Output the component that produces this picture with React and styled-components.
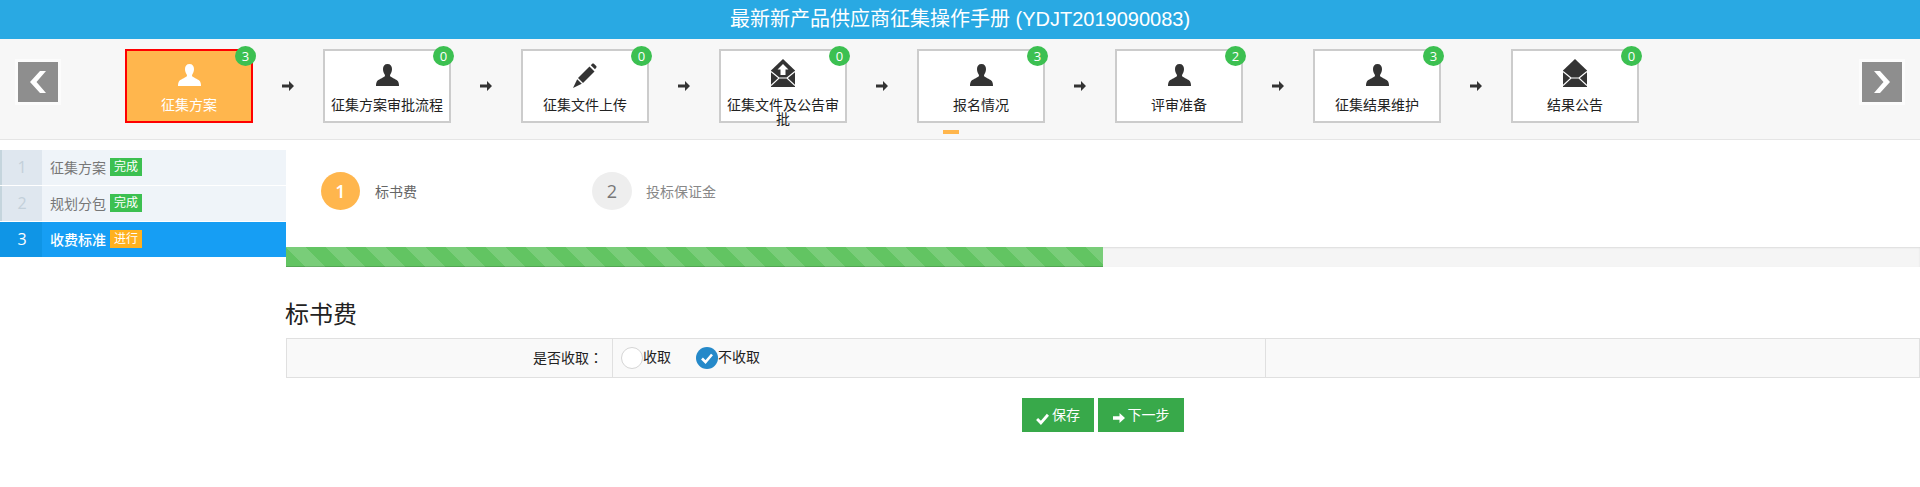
import React from 'react';
import styled, { createGlobalStyle } from 'styled-components';

const GlobalStyle = createGlobalStyle`
  html, body {
    margin: 0;
    padding: 0;
    background: #fff;
    font-family: "Open Sans", "Noto Sans CJK SC", sans-serif;
    font-size: 14px;
    color: #333;
  }
  * {
    box-sizing: border-box;
  }
`;

const Header = styled.header`
  height: 39px;
  background: #29a9e3;
  color: #fff;
  font-family: "Liberation Sans", "Noto Sans CJK SC", sans-serif;
  font-size: 20px;
  line-height: 39px;
  text-align: center;
`;

const Nav = styled.nav`
  position: relative;
  display: flex;
  align-items: flex-start;
  height: 101px;
  background: #f7f7f7;
  border-bottom: 1px solid #e5e5e5;
`;

const PageButton = styled.button`
  flex: none;
  display: flex;
  align-items: center;
  justify-content: center;
  width: 46px;
  height: 46px;
  margin: 20px 0 0 ${p => p.$left}px;
  padding: 0;
  background: #8e8e8e;
  border: 3px solid #fcfcfc;
`;

const StepList = styled.div`
  display: flex;
  align-items: center;
  margin: 10px 0 0 64px;
`;

const StepWrap = styled.div`
  display: flex;
  align-items: center;
`;

const Step = styled.div`
  position: relative;
  width: 128px;
  height: 74px;
  padding-top: 13px;
  background: ${p => (p.$active ? '#ffb64d' : '#fff')};
  border: 2px solid ${p => (p.$active ? '#ff0000' : '#ccc')};
  color: ${p => (p.$active ? '#fff' : '#222')};
  text-align: center;
`;

const StepIcon = styled.div`
  display: flex;
  align-items: center;
  justify-content: center;
  height: 22px;
`;

const StepLabel = styled.div`
  margin-top: 12px;
  padding: 0 2px;
  font-size: 14px;
  line-height: 14px;
`;

const Count = styled.span`
  position: absolute;
  top: -5px;
  right: -5px;
  width: 21px;
  height: 20px;
  border-radius: 50%;
  background: #3cc051;
  color: #fff;
  font-size: 13px;
  line-height: 20px;
  text-align: center;
`;

const ArrowSlot = styled.div`
  display: flex;
  align-items: center;
  justify-content: center;
  width: 70px;
`;

const ScrollMark = styled.span`
  position: absolute;
  left: 943px;
  top: 91px;
  width: 16px;
  height: 4px;
  background: #ffb64d;
`;

const Main = styled.main`
  display: flex;
  align-items: flex-start;
`;

const Sidebar = styled.ul`
  flex: none;
  width: 286px;
  margin: 10px 0 0;
  padding: 0;
  list-style: none;
`;

const SideItem = styled.li`
  display: flex;
  align-items: center;
  height: 35px;
  margin-bottom: 1px;
  background: ${p => (p.$active ? '#169ef4' : '#eff4f9')};
  color: ${p => (p.$active ? '#fff' : '#777')};
  font-size: 14px;
  font-weight: ${p => (p.$active ? 500 : 400)};
`;

const SideNumber = styled.span`
  flex: none;
  width: 42px;
  height: 100%;
  margin-right: 8px;
  background: ${p => (p.$active ? '#0f95e6' : '#dfe7ef')};
  border-left: 2px solid ${p => (p.$active ? '#0f95e6' : '#c5d5dd')};
  color: ${p => (p.$active ? '#fff' : '#c3d0da')};
  font-size: 16px;
  font-weight: 400;
  line-height: 35px;
  text-align: center;
`;

const SideText = styled.span`
  display: flex;
  align-items: center;
  margin-top: -2px;
`;

const SideBadge = styled.span`
  width: 32px;
  height: 18px;
  margin-left: 4px;
  background: ${p => (p.$active ? '#ffb11f' : '#3cc051')};
  color: #fff;
  font-size: 12px;
  font-weight: 400;
  line-height: 18px;
  text-align: center;
`;

const Content = styled.section`
  flex: 1;
  min-width: 0;
`;

const Tabs = styled.div`
  display: flex;
  align-items: center;
  height: 38px;
  margin: 32px 0 37px 35px;
`;

const Tab = styled.div`
  display: flex;
  align-items: center;
  width: 271px;
  color: ${p => (p.$active ? '#666' : '#888')};
  font-size: 14px;
`;

const TabNumber = styled.span`
  width: ${p => (p.$active ? 39 : 40)}px;
  height: 38px;
  margin-right: ${p => (p.$active ? 15 : 14)}px;
  border-radius: 50%;
  background: ${p => (p.$active ? '#ffb64d' : '#eee')};
  color: ${p => (p.$active ? '#fff' : '#777')};
  font-size: 18px;
  font-weight: ${p => (p.$active ? 600 : 400)};
  line-height: 38px;
  text-align: center;
`;

const Progress = styled.div`
  height: 20px;
  background: #f5f5f5;
  box-shadow: inset 0 1px 2px rgba(0, 0, 0, 0.1);
`;

const ProgressFill = styled.div`
  height: 100%;
  background-color: #62c462;
  background-image: linear-gradient(
    45deg,
    rgba(255, 255, 255, 0.15) 25%,
    transparent 25%,
    transparent 50%,
    rgba(255, 255, 255, 0.15) 50%,
    rgba(255, 255, 255, 0.15) 75%,
    transparent 75%,
    transparent
  );
  background-size: 40px 40px;
  box-shadow: inset 0 -1px 0 rgba(0, 0, 0, 0.15);
`;

const Title = styled.h3`
  margin: 32px 0 10px -1px;
  color: #222;
  font-size: 24px;
  font-weight: 400;
  line-height: 29px;
`;

const FormRow = styled.div`
  display: grid;
  grid-template-columns: 326px 652px 1fr;
  height: 40px;
  background: #f9f9f9;
  border: 1px solid #e0e0e0;
`;

const FormLabel = styled.div`
  padding-right: 9px;
  border-right: 1px solid #e0e0e0;
  color: #222;
  line-height: 36px;
  text-align: right;
`;

const FormColon = styled.span`
  font-family: "Noto Sans CJK TC", sans-serif;
`;

const FormCell = styled.div`
  display: flex;
  align-items: center;
  padding-left: 8px;
  color: #222;
  & + & {
    border-left: 1px solid #e0e0e0;
  }
`;

const Radio = styled.label`
  display: flex;
  align-items: center;
  margin-right: 25px;
`;

const RadioMark = styled.span`
  display: flex;
  align-items: center;
  justify-content: center;
  width: 22px;
  height: 22px;
  border-radius: 50%;
  background: ${p => (p.$checked ? '#2589c9' : '#fff')};
  border: ${p => (p.$checked ? 'none' : '1px solid #d5d5d5')};
`;

const RadioText = styled.span`
  margin-top: -4px;
`;

const Actions = styled.div`
  display: flex;
  justify-content: center;
  gap: 4px;
  margin-top: 20px;
`;

const ActionButton = styled.button`
  display: flex;
  align-items: center;
  justify-content: center;
  gap: 3px;
  width: ${p => p.$width}px;
  height: 34px;
  padding: 0;
  background: #38a94a;
  border: none;
  color: #fff;
  font-family: inherit;
  font-size: 14px;
  svg {
    margin-top: 6px;
  }
`;

const ActionText = styled.span`
  margin-top: -2px;
`;

const MailSvg = styled.svg`
  margin-bottom: 4px;
`;

const UserIcon = ({ color }) => (
  <svg width="23" height="22" viewBox="0 0 23 22">
    <path
      fill={color}
      d="M11.5 0C8.6 0 7 2 7 5c0 2.2.7 4.2 1.7 5.4.4.5.4 1.6-.2 2.2C7 14 2 15.600.9 17.500.3 18.600 0 20 0 22h23c0-2-.3-3.400-.9-4.500-1.100-1.900-6.100-3.500-7.600-4.900-.6-.6-.6-1.700-.2-2.200C15.300 9.200 16 7.200 16 5c0-3-1.600-5-4.500-5z"
    />
  </svg>
);

const PencilIcon = () => (
  <svg width="24" height="25" viewBox="0 0 24 25">
    <path fill="#333" d="M5 15 16.500 3.500l5 5L10 20z" />
    <path fill="#333" d="M17.800 2.200l1.400-1.400c.5-.5 1.200-.5 1.700 0l2.300 2.300c.5.5.5 1.200 0 1.700L22 6.200z" />
    <path fill="#333" d="M4.200 16.200l4.600 4.600L0 25z" />
  </svg>
);

const MailIcon = ({ upload }) => (
  <MailSvg width="24" height="28" viewBox="0 0 24 28">
    <path fill="#333" d="M12 0 24 11.500V28H0V11.500z" />
    <path fill="none" stroke="#fff" strokeWidth="1.200" d="M0 26.500 8 19h8l8 7.500M0 12.500 8 19M24 12.500 16 19" />
    {upload && <path fill="#fff" d="M12 5l5.500 5.500H14.500V16h-5v-5.500H6.500z" />}
  </MailSvg>
);

const StepArrow = () => (
  <svg width="12" height="10" viewBox="0 0 12 10">
    <path fill="#333" d="M0 3.500h7V0l5 5-5 5V6.500H0z" />
  </svg>
);

const Chevron = ({ left }) => (
  <svg width="16" height="22" viewBox="0 0 16 22" style={left ? undefined : { transform: 'scaleX(-1)' }}>
    <path fill="#fff" d="M10 0h6L6.500 11 16 22h-6L0 11z" />
  </svg>
);

const CheckIcon = ({ size = 12 }) => (
  <svg width={size} height={size} viewBox="0 0 12 12">
    <path fill="none" stroke="#fff" strokeWidth="2.600" d="M1 6.500 4.500 10 11 2.500" />
  </svg>
);

const NextIcon = () => (
  <svg width="12" height="12" viewBox="0 0 12 12">
    <path fill="#fff" d="M0 4.200h6.500V1L12 6l-5.500 5V7.800H0z" />
  </svg>
);

const steps = [
  { label: '征集方案', count: 3, icon: 'user', active: true },
  { label: '征集方案审批流程', count: 0, icon: 'user' },
  { label: '征集文件上传', count: 0, icon: 'pencil' },
  { label: '征集文件及公告审批', count: 0, icon: 'upload' },
  { label: '报名情况', count: 3, icon: 'user' },
  { label: '评审准备', count: 2, icon: 'user' },
  { label: '征集结果维护', count: 3, icon: 'user' },
  { label: '结果公告', count: 0, icon: 'mail' },
];

const sideItems = [
  { id: 1, label: '征集方案', state: '完成' },
  { id: 2, label: '规划分包', state: '完成' },
  { id: 3, label: '收费标准', state: '进行', active: true },
];

const renderIcon = step => {
  if (step.icon === 'pencil') return <PencilIcon />;
  if (step.icon === 'upload') return <MailIcon upload />;
  if (step.icon === 'mail') return <MailIcon />;
  return <UserIcon color={step.active ? '#fff' : '#333'} />;
};

export default function App() {
  return (
    <>
      <GlobalStyle />
      <Header>最新新产品供应商征集操作手册 (YDJT2019090083)</Header>
      <Nav>
        <PageButton $left={15}>
          <Chevron left />
        </PageButton>
        <StepList>
          {steps.map((step, index) => (
            <StepWrap key={step.label}>
              <Step $active={step.active}>
                <StepIcon>{renderIcon(step)}</StepIcon>
                <StepLabel>{step.label}</StepLabel>
                <Count>{step.count}</Count>
              </Step>
              {index < steps.length - 1 && (
                <ArrowSlot>
                  <StepArrow />
                </ArrowSlot>
              )}
            </StepWrap>
          ))}
        </StepList>
        <PageButton $left={220}>
          <Chevron />
        </PageButton>
        <ScrollMark />
      </Nav>
      <Main>
        <Sidebar>
          {sideItems.map(item => (
            <SideItem key={item.id} $active={item.active}>
              <SideNumber $active={item.active}>{item.id}</SideNumber>
              <SideText>
                {item.label}
                <SideBadge $active={item.active}>{item.state}</SideBadge>
              </SideText>
            </SideItem>
          ))}
        </Sidebar>
        <Content>
          <Tabs>
            <Tab $active>
              <TabNumber $active>1</TabNumber>
              标书费
            </Tab>
            <Tab>
              <TabNumber>2</TabNumber>
              投标保证金
            </Tab>
          </Tabs>
          <Progress>
            <ProgressFill style={{ width: '50%' }} />
          </Progress>
          <Title>标书费</Title>
          <FormRow>
            <FormLabel>
              是否收取<FormColon>：</FormColon>
            </FormLabel>
            <FormCell>
              <Radio>
                <RadioMark />
                <RadioText>收取</RadioText>
              </Radio>
              <Radio>
                <RadioMark $checked>
                  <CheckIcon />
                </RadioMark>
                <RadioText>不收取</RadioText>
              </Radio>
            </FormCell>
            <FormCell />
          </FormRow>
          <Actions>
            <ActionButton $width={72}>
              <CheckIcon size={13} />
              <ActionText>保存</ActionText>
            </ActionButton>
            <ActionButton $width={86}>
              <NextIcon />
              <ActionText>下一步</ActionText>
            </ActionButton>
          </Actions>
        </Content>
      </Main>
    </>
  );
}
